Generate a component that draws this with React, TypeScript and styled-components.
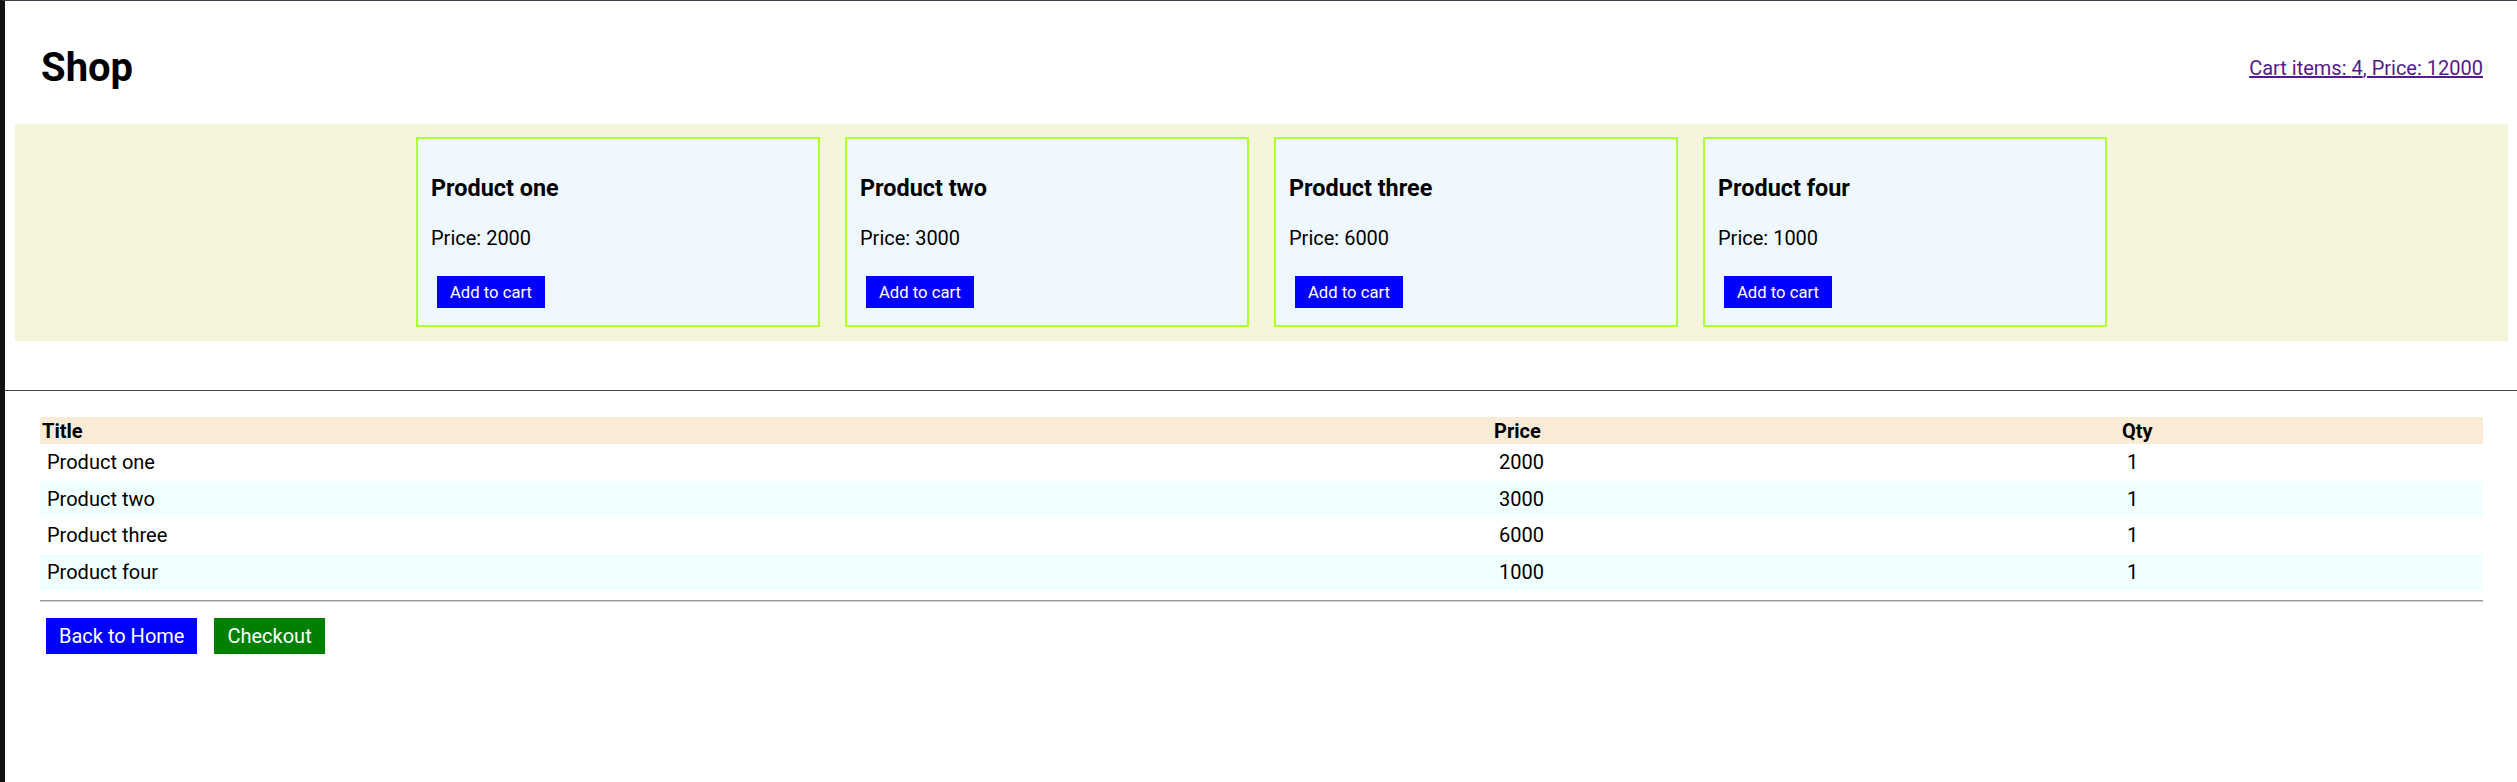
import React from "react";
import styled, { createGlobalStyle } from "styled-components";

const GlobalStyle = createGlobalStyle`
  html, body {
    margin: 0;
    padding: 0;
    background: #ffffff;
  }
  body {
    font-family: Roboto, "Liberation Sans", Arial, sans-serif;
    color: #000000;
  }
`;

const Frame = styled.div`
  min-height: 782px;
  box-sizing: border-box;
  border-left: 5px solid #111111;
  border-top: 1px solid #3d3f4e;
`;

const Header = styled.header`
  height: 123px;
  box-sizing: border-box;
  padding: 10px 34px 0 36px;
  display: flex;
  align-items: center;
  justify-content: space-between;
`;

const Title = styled.h1`
  margin: 0;
  font-size: 40px;
  line-height: 48px;
  font-weight: 700;
`;

const CartLink = styled.a`
  font-size: 20px;
  line-height: 24px;
  color: #551a8b;
  text-decoration: underline;
  cursor: pointer;
`;

const ProductBand = styled.section`
  margin: 0 9px 0 10px;
  height: 217px;
  box-sizing: border-box;
  padding: 13px 0 0 0;
  background: #f5f5dc;
  display: flex;
  justify-content: center;
  align-items: flex-start;
  gap: 25px;
`;

const Card = styled.div`
  width: 404px;
  height: 190px;
  box-sizing: border-box;
  border: 2px solid #adff2f;
  background: #f0f8ff;
  padding: 35px 13px 0;
  display: flex;
  flex-direction: column;
  align-items: flex-start;
`;

const CardTitle = styled.h3`
  margin: 0;
  font-size: 23.4px;
  line-height: 28px;
  font-weight: 700;
`;

const CardPrice = styled.p`
  margin: 24px 0 0;
  font-size: 20px;
  line-height: 24px;
`;

const Button = styled.button<{ $variant?: "blue" | "green"; $size?: "sm" | "md" }>`
  border: none;
  margin: 0;
  padding: 0 13px;
  height: ${(p) => (p.$size === "sm" ? "32px" : "36px")};
  font-family: Roboto, "Liberation Sans", Arial, sans-serif;
  font-size: ${(p) => (p.$size === "sm" ? "16.67px" : "20px")};
  color: #ffffff;
  background: ${(p) => (p.$variant === "green" ? "#008000" : "#0000ff")};
  display: inline-flex;
  align-items: center;
  cursor: pointer;
`;

const CardAction = styled.div`
  margin: 26px 0 0 6px;
`;

const Divider = styled.hr`
  margin: 49px 0 0;
  border: none;
  height: 1px;
  background: #45454f;
`;

const TableWrap = styled.section`
  padding: 26px 34px 0 35px;
`;

const CartTable = styled.table`
  width: 100%;
  border-collapse: collapse;
  table-layout: fixed;
  font-size: 20px;
`;

const HeadRow = styled.tr`
  background: #faebd7;
  height: 27px;
`;

const HeadCell = styled.th`
  text-align: left;
  padding: 0 2px;
  font-weight: 700;
  line-height: 24px;
  vertical-align: middle;
`;

const Row = styled.tr<{ $alt: boolean }>`
  background: ${(p) => (p.$alt ? "#f0ffff" : "#ffffff")};
  height: 36.5px;
`;

const Cell = styled.td`
  padding: 0 7px;
  line-height: 24px;
  vertical-align: middle;
`;

const Rule = styled.div`
  margin-top: 10px;
  border-top: 1px solid #9a9a9a;
  border-bottom: 1px solid #cfcfcf;
`;

const Actions = styled.div`
  padding: 16px 0 0 6px;
  display: flex;
  gap: 17px;
`;

const products = [
  { title: "Product one", price: 2000 },
  { title: "Product two", price: 3000 },
  { title: "Product three", price: 6000 },
  { title: "Product four", price: 1000 },
];

export default function App() {
  const total = products.reduce((s, p) => s + p.price, 0);
  return (
    <>
      <GlobalStyle />
      <Frame>
        <Header>
          <Title>Shop</Title>
          <CartLink href="#">
            Cart items: {products.length}, Price: {total}
          </CartLink>
        </Header>
        <ProductBand>
          {products.map((p) => (
            <Card key={p.title}>
              <CardTitle>{p.title}</CardTitle>
              <CardPrice>Price: {p.price}</CardPrice>
              <CardAction>
                <Button $size="sm">Add to cart</Button>
              </CardAction>
            </Card>
          ))}
        </ProductBand>
        <Divider />
        <TableWrap>
          <CartTable>
            <colgroup>
              <col style={{ width: "1452px" }} />
              <col style={{ width: "628px" }} />
              <col />
            </colgroup>
            <thead>
              <HeadRow>
                <HeadCell>Title</HeadCell>
                <HeadCell>Price</HeadCell>
                <HeadCell>Qty</HeadCell>
              </HeadRow>
            </thead>
            <tbody>
              {products.map((p, i) => (
                <Row key={p.title} $alt={i % 2 === 1}>
                  <Cell>{p.title}</Cell>
                  <Cell>{p.price}</Cell>
                  <Cell>1</Cell>
                </Row>
              ))}
            </tbody>
          </CartTable>
          <Rule />
          <Actions>
            <Button>Back to Home</Button>
            <Button $variant="green">Checkout</Button>
          </Actions>
        </TableWrap>
      </Frame>
    </>
  );
}
